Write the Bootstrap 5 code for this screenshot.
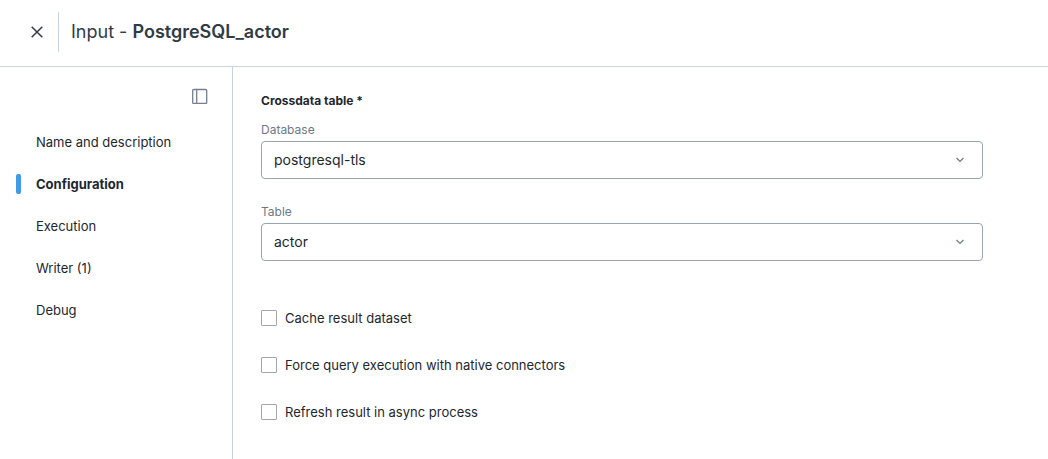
<!DOCTYPE html>
<html lang="en">
<head>
<meta charset="utf-8">
<meta name="viewport" content="width=device-width, initial-scale=1">
<title>Input - PostgreSQL_actor</title>
<link href="https://cdn.jsdelivr.net/npm/bootstrap@5.3.0/dist/css/bootstrap.min.css" rel="stylesheet">
<style>
  body { font-family: Inter, "Liberation Sans", sans-serif; font-size: 13px; line-height: 20px; color: #1d2730; }
  .top-bar { border-bottom: 1px solid #c9d2dd; padding: 12px 24px 14px; }
  .close-btn { width: 26px; height: 40px; color: #2f3b47; }
  .top-title { border-left: 1px solid #c9d2dd; margin-left: 8px; padding-left: 12px; font-size: 18px; line-height: 40px; color: #2f3b47; }
  .top-title strong { font-weight: 600; }
  .side { width: 233px; border-right: 1px solid #c9d2dd; padding: 21px 24px 24px 16px; }
  .panel-btn { width: 16px; height: 16px; color: #75818f; }
  .side-nav { margin-top: 17px; }
  .side-nav .nav-link { padding: 11px 0; font-size: 13px; color: #1d2730; gap: 15px; }
  .side-nav .nav-link::before { content: ""; width: 5px; height: 20px; border-radius: 2px; }
  .side-nav .active { font-weight: 700; }
  .side-nav .active::before { background: #3f9ae8; }
  .content { padding: 24px 65px 24px 28px; }
  .section-title { font-size: 12px; font-weight: 700; line-height: 20px; margin-bottom: 11px; }
  .field-label { font-size: 12px; line-height: 16px; margin-bottom: 3px; color: #6d7986; }
  .field-select { font-size: 14px; line-height: 20px; height: 38px; padding: 8px 40px 8px 12px; color: #1d2730; border: 1px solid #98a4b2; border-radius: 4px;
    background-image: url("data:image/svg+xml,%3Csvg xmlns='http://www.w3.org/2000/svg' viewBox='0 0 8 6'%3E%3Cpath d='M.5 1 4 4.500 7.500 1' fill='none' stroke='%236d7986' stroke-width='1.200'/%3E%3C/svg%3E");
    background-size: 8px 6px; background-position: right 18px center; }
  .field { margin-bottom: 25px; }
  .checks { margin-top: 47px; gap: 27px; }
  .check-box { width: 16px; height: 16px; border: 1px solid #a6a6a6; }
  .check-box[type=checkbox] { border-radius: 1px; }
</style>
</head>
<body class="bg-white">
<div class="d-flex flex-column min-vh-100">
  <header class="top-bar d-flex align-items-center">
    <button type="button" class="close-btn btn p-0 border-0 d-flex align-items-center justify-content-center" aria-label="Close">
      <svg width="12" height="12" viewBox="0 0 12 12" fill="none" stroke="currentColor" stroke-width="1.5"><path d="M.7.7l10.600 10.600M11.300.7.7 11.300"/></svg>
    </button>
    <h1 class="top-title fw-normal mb-0">Input - <strong>PostgreSQL_actor</strong></h1>
  </header>
  <div class="d-flex flex-grow-1">
    <aside class="side flex-shrink-0">
      <div class="d-flex justify-content-end">
        <button type="button" class="panel-btn btn p-0 border-0 d-flex align-items-center justify-content-center" aria-label="Toggle menu">
          <svg width="16" height="16" viewBox="0 0 16 16" fill="none" stroke="currentColor"><rect x=".7" y="1.500" width="14" height="14" rx="1" stroke-width="1.300"/><path d="M4.700 1.500v14" stroke-width="1.300"/></svg>
        </button>
      </div>
      <nav class="side-nav nav flex-column">
        <a class="nav-link d-flex align-items-center" href="#">Name and description</a>
        <a class="nav-link d-flex align-items-center active" aria-current="page" href="#">Configuration</a>
        <a class="nav-link d-flex align-items-center" href="#">Execution</a>
        <a class="nav-link d-flex align-items-center" href="#">Writer (1)</a>
        <a class="nav-link d-flex align-items-center" href="#">Debug</a>
      </nav>
    </aside>
    <main class="content flex-grow-1">
      <h2 class="section-title">Crossdata table *</h2>
      <div class="field">
        <label class="field-label d-block" for="database">Database</label>
        <select class="field-select form-select" id="database"><option>postgresql-tls</option></select>
      </div>
      <div class="field">
        <label class="field-label d-block" for="table">Table</label>
        <select class="field-select form-select" id="table"><option>actor</option></select>
      </div>
      <div class="checks d-flex flex-column">
        <div class="d-flex align-items-center gap-2"><input class="check-box form-check-input m-0" type="checkbox" id="cache"><label for="cache">Cache result dataset</label></div>
        <div class="d-flex align-items-center gap-2"><input class="check-box form-check-input m-0" type="checkbox" id="force"><label for="force">Force query execution with native connectors</label></div>
        <div class="d-flex align-items-center gap-2"><input class="check-box form-check-input m-0" type="checkbox" id="refresh"><label for="refresh">Refresh result in async process</label></div>
      </div>
    </main>
  </div>
</div>
<script src="https://cdn.jsdelivr.net/npm/bootstrap@5.3.0/dist/js/bootstrap.bundle.min.js"></script>
</body>
</html>
